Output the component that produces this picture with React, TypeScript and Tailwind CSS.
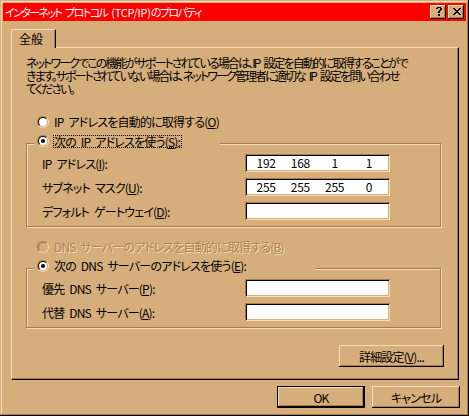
import React from 'react';

function Radio({ checked, disabled }: { checked?: boolean; disabled?: boolean }) {
  return (
    <span className="relative inline-block w-[12px] h-[12px] shrink-0 rounded-full border border-t-[#a87a46] border-l-[#a87a46] border-r-[#f5deb8] border-b-[#f5deb8]">
      <span
        className={
          disabled
            ? 'absolute inset-0 rounded-full border border-t-[#a87a46] border-l-[#a87a46] border-r-[#d6ae7b] border-b-[#d6ae7b] bg-[#d6ae7b]'
            : 'absolute inset-0 rounded-full border border-t-black border-l-black border-r-[#d6ae7b] border-b-[#d6ae7b] bg-white'
        }
      />
      {checked && <span className="absolute left-[3px] top-[3px] w-[4px] h-[4px] rounded-full bg-black" />}
    </span>
  );
}

function Field({ values }: { values?: string[] }) {
  return (
    <div className="w-[145px] h-[18px] bg-white shadow-[inset_1px_1px_#a87a46,inset_-1px_-1px_#f5deb8,inset_2px_2px_#000,inset_-2px_-2px_#d6ae7b] grid grid-cols-4 items-center px-[4px]">
      {values &&
        values.map((v, i) => (
          <span key={i} className="text-center leading-[14px] tracking-[-0.3px]">
            {v}
          </span>
        ))}
    </div>
  );
}

function Row({ label, values }: { label: React.ReactNode; values?: string[] }) {
  return (
    <div className="flex items-center h-[18px] mt-[6px] pl-[15px]">
      <span className="w-[203px] whitespace-nowrap">{label}</span>
      <Field values={values} />
    </div>
  );
}

function Button({ children, def, className }: { children: React.ReactNode; def?: boolean; className?: string }) {
  return (
    <div
      className={
        (def
          ? 'border border-black shadow-[inset_-1px_-1px_#000,inset_1px_1px_#f5deb8,inset_-2px_-2px_#a87a46] '
          : 'shadow-[inset_-1px_-1px_#000,inset_1px_1px_#f5deb8,inset_-2px_-2px_#a87a46] ') +
        'bg-[#d6ae7b] flex items-center justify-center h-[22px] whitespace-nowrap ' +
        (className || '')
      }
    >
      {children}
    </div>
  );
}

function TitleBtn({ children }: { children: React.ReactNode }) {
  return (
    <div className="w-[16px] h-[14px] bg-[#d6ae7b] shadow-[inset_-1px_-1px_#000,inset_1px_1px_#f5deb8,inset_-2px_-2px_#a87a46] flex items-center justify-center">
      {children}
    </div>
  );
}

function XGlyph() {
  const px: [number, number][] = [
    [0, 0], [1, 0], [6, 0], [7, 0],
    [1, 1], [2, 1], [5, 1], [6, 1],
    [2, 2], [3, 2], [4, 2], [5, 2],
    [3, 3], [4, 3],
    [2, 4], [3, 4], [4, 4], [5, 4],
    [1, 5], [2, 5], [5, 5], [6, 5],
    [0, 6], [1, 6], [6, 6], [7, 6],
  ];
  return (
    <svg width="8" height="7" viewBox="0 0 8 7" shapeRendering="crispEdges" className="-mt-[1px] -mr-[1px]">
      {px.map(([x, y], i) => (
        <rect key={i} x={x} y={y} width="1" height="1" fill="#000" />
      ))}
    </svg>
  );
}

function QGlyph() {
  const px: [number, number][] = [
    [1, 0], [2, 0], [3, 0], [4, 0],
    [0, 1], [1, 1], [4, 1], [5, 1],
    [4, 2], [5, 2],
    [3, 3], [4, 3],
    [2, 4], [3, 4],
    [2, 5], [3, 5],
    [2, 7], [3, 7],
    [2, 8], [3, 8],
  ];
  return (
    <svg width="6" height="9" viewBox="0 0 6 9" shapeRendering="crispEdges" className="-mt-[1px] -mr-[1px]">
      {px.map(([x, y], i) => (
        <rect key={i} x={x} y={y} width="1" height="1" fill="#000" />
      ))}
    </svg>
  );
}

export default function App() {
  return (
    <div className="w-[469px] h-[416px] bg-[#d6ae7b] p-[3px] flex flex-col shadow-[inset_-1px_-1px_#000,inset_1px_1px_#d6ae7b,inset_-2px_-2px_#a87a46,inset_2px_2px_#f5deb8] text-black text-[12px] leading-[13px] tracking-[-0.8px] [word-spacing:3px] font-['Noto_Sans_CJK_JP',sans-serif] [font-feature-settings:'palt']">
      {/* Title bar */}
      <div className="h-[18px] shrink-0 bg-[#ff0000] flex items-center justify-between pl-[2px] pr-[2px]">
        <span className="text-white whitespace-nowrap text-[11px] tracking-[-1.6px]">
          インターネット プロトコル <span className="tracking-[-0.2px]">(TCP/IP)</span>のプロパティ
        </span>
        <div className="flex gap-[2px]">
          <TitleBtn>
            <QGlyph />
          </TitleBtn>
          <TitleBtn>
            <XGlyph />
          </TitleBtn>
        </div>
      </div>

      {/* Tabs */}
      <div className="mt-[8px] pl-[8px] flex">
        <div className="relative z-10 w-[45px] h-[19px] -mb-px bg-[#d6ae7b] border-l border-t border-l-[#f5deb8] border-t-[#f5deb8] border-r border-r-black rounded-tl-[2px] shadow-[inset_-1px_0_#a87a46] pl-[7px] pt-[2px] leading-[14px] tracking-[0px]">
          全般
        </div>
      </div>

      {/* Panel */}
      <div className="ml-[8px] mr-[7px] h-[333px] shrink-0 border border-t-[#f5deb8] border-l-[#f5deb8] border-r-black border-b-black shadow-[inset_-1px_-1px_#a87a46] flex flex-col">
        <p className="pl-[14px] pt-[8px] whitespace-nowrap leading-[13px] tracking-[-1.9px]">
          ネットワークでこの機能がサポートされている場合は、IP 設定を自動的に取得することがで
          <br />
          きます。サポートされていない場合は、ネットワーク管理者に適切な IP 設定を問い合わせ
          <br />
          てください。
        </p>

        <div className="mt-[20px] ml-[25px] h-[14px] flex items-center gap-[4px]">
          <Radio />
          <span className="border border-transparent leading-[12px] whitespace-nowrap">
            IP アドレスを自動的に取得する(<u>O</u>)
          </span>
        </div>

        {/* Group 1 */}
        <div className="mt-[14px] ml-[14px] w-[415px] border border-[#a87a46] shadow-[inset_1px_1px_#f5deb8,1px_1px_#f5deb8] pb-[6px] flex flex-col">
          <div className="-mt-[10px] ml-[7px] pl-[3px] w-[186px] h-[14px] bg-[#d6ae7b] flex items-center gap-[4px]">
            <Radio checked />
            <span className="border border-dotted border-black leading-[11px] whitespace-nowrap pr-[1px]">
              次の IP アドレスを使う(<u>S</u>):
            </span>
          </div>
          <Row label={<>IP アドレス(<u>I</u>):</>} values={['192', '168', '1', '1']} />
          <Row label={<>サブネット マスク(<u>U</u>):</>} values={['255', '255', '255', '0']} />
          <Row label={<>デフォルト ゲートウェイ(<u>D</u>):</>} />
        </div>

        <div className="mt-[13px] ml-[25px] h-[14px] flex items-center gap-[4px]">
          <Radio disabled />
          <span className="border border-transparent leading-[12px] whitespace-nowrap text-[#ad8150] [text-shadow:1px_1px_0_#f5deb8]">
            DNS サーバーのアドレスを自動的に取得する(<u>B</u>)
          </span>
        </div>

        {/* Group 2 */}
        <div className="mt-[14px] ml-[14px] w-[415px] border border-[#a87a46] shadow-[inset_1px_1px_#f5deb8,1px_1px_#f5deb8] pb-[6px] flex flex-col">
          <div className="-mt-[10px] ml-[7px] pl-[3px] w-[281px] h-[14px] bg-[#d6ae7b] flex items-center gap-[4px]">
            <Radio checked />
            <span className="border border-transparent leading-[12px] whitespace-nowrap">
              次の DNS サーバーのアドレスを使う(<u>E</u>):
            </span>
          </div>
          <Row label={<>優先 DNS サーバー(<u>P</u>):</>} />
          <Row label={<>代替 DNS サーバー(<u>A</u>):</>} />
        </div>

        <div className="mt-[17px] flex justify-end pr-[14px]">
          <Button className="w-[105px]">
            詳細設定(<u>V</u>)...
          </Button>
        </div>
      </div>

      {/* Bottom buttons */}
      <div className="mt-[6px] flex justify-end gap-[7px] pr-[6px]">
        <Button def className="w-[88px]">
          OK
        </Button>
        <Button className="w-[88px]">キャンセル</Button>
      </div>
    </div>
  );
}
